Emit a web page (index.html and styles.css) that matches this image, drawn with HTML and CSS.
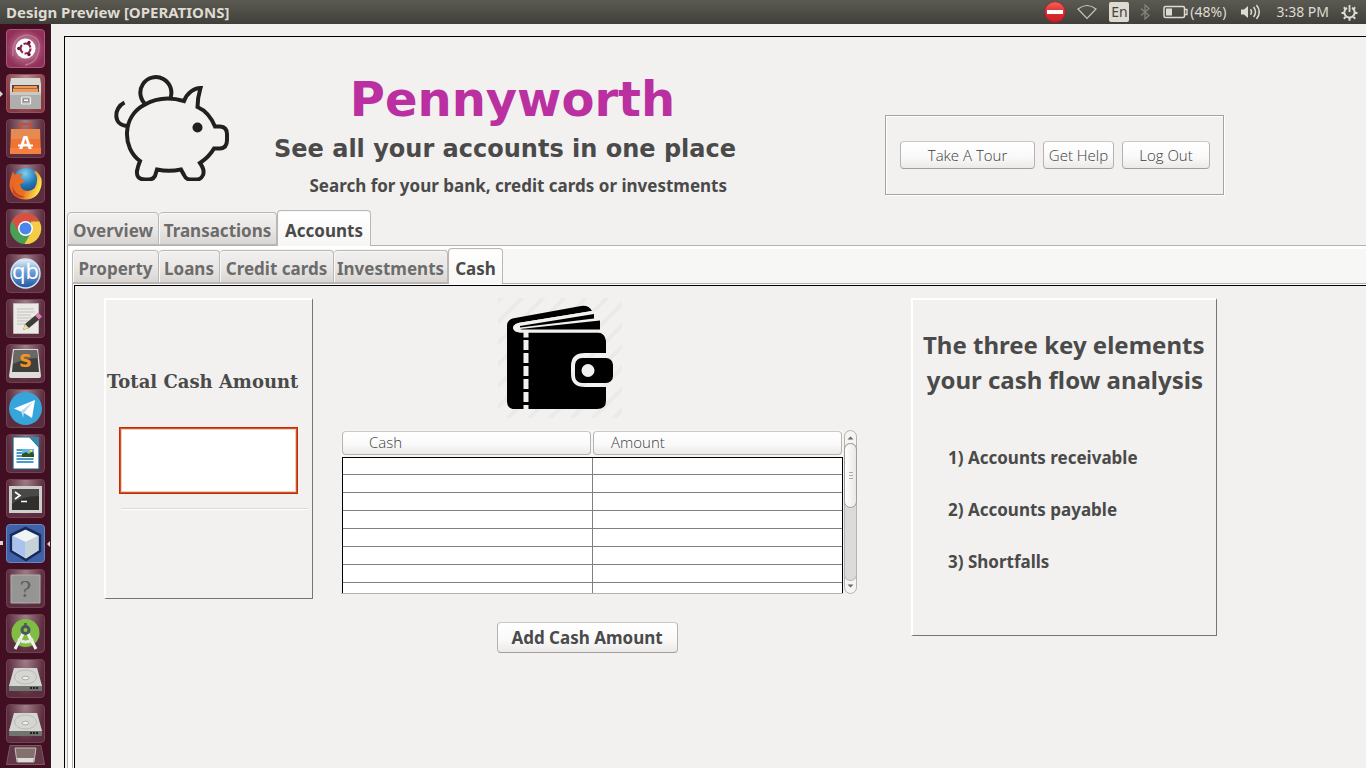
FILE: index.html
```html
<!DOCTYPE html>
<html lang="en">
<head>
<meta charset="utf-8">
<title>Design Preview [OPERATIONS]</title>
<link rel="stylesheet" href="styles.css">
</head>
<body>
<header class="topbar">
  <span class="topbar-title">Design Preview [OPERATIONS]</span>
  <div class="indicators">
    <svg class="ind-stop" width="22" height="22" viewBox="0 0 22 22"><defs><linearGradient id="stop" x1="0" y1="0" x2="0" y2="1"><stop offset="0" stop-color="#f2675c"/><stop offset=".5" stop-color="#dc2f2d"/><stop offset="1" stop-color="#c91e28"/></linearGradient></defs><circle cx="11" cy="11" r="10.3" fill="url(#stop)" stroke="#a3202a" stroke-width=".8"/><rect x="3" y="9" width="16" height="4" fill="#fff"/></svg>
    <svg class="ind-wifi" width="20" height="16" viewBox="0 0 20 16"><path d="M1 5 Q10-2 19 5 L10 14.500Z" fill="none" stroke="#c9c5bc" stroke-width="1.200"/></svg>
    <span class="ind-lang">En</span>
    <svg class="ind-bt" width="10" height="16" viewBox="0 0 10 16"><path d="M1 4.500 9 11.500 5 15V1L9 4.500 1 11.500" fill="none" stroke="#85837b" stroke-width="1.300"/></svg>
    <svg class="ind-bat" width="25" height="14" viewBox="0 0 25 14"><rect x="1" y="1.500" width="20.500" height="11" rx="1.500" fill="none" stroke="#dfdbd2" stroke-width="1.500"/><rect x="3" y="3.500" width="6" height="7" fill="#dfdbd2"/><path d="M22 4.500h2v5h-2" fill="none" stroke="#dfdbd2" stroke-width="1.300"/></svg>
    <span class="ind-pct">(48%)</span>
    <svg class="ind-vol" width="21" height="18" viewBox="0 0 21 18"><path d="M1 6.500h3L8 3v12l-4-3.500H1z" fill="#dfdbd2"/><path d="M10.500 6.200q2 2.800 0 5.600M13.500 4q4 5 0 10M16.500 2q5.500 7 0 14" fill="none" stroke="#dfdbd2" stroke-width="1.500"/></svg>
    <span class="ind-time">3:38 PM</span>
    <svg class="ind-gear" width="17" height="17" viewBox="0 0 17 17"><g fill="none" stroke="#dfdbd2"><path d="M6 3.800a5.200 5.200 0 1 0 5 0" stroke-width="2"/><path d="M8.500 1v7" stroke-width="1.800"/><path d="M.5 9h2.500M14 9h2.500M2.800 3.300l1.700 1.700M14.200 3.300l-1.700 1.700M2.800 14.700l1.800-1.800M14.200 14.700l-1.800-1.800M8.500 14v2.800" stroke-width="2"/></g></svg>
  </div>
</header>
<div class="desktop">
  <nav class="launcher" aria-label="Launcher">
    <a href="#" class="tile tile-dash" aria-label="Dash"><svg viewBox="0 0 39 39"><path d="M7 27Q5 9 20 6 35 7 33 21 31 34 19 36" fill="none" stroke="#c58aa2" stroke-width="1.500" opacity=".7"/><path d="M11 30Q3 20 12 11 22 3 30 12 36 25 26 30" fill="#c47794" opacity=".35"/><circle cx="19.500" cy="19.500" r="10" fill="#fff"/><circle cx="19.500" cy="19.500" r="5" fill="none" stroke="#8c2148" stroke-width="2.200" stroke-dasharray="8.600 1.870"/><g fill="#6b1235"><circle cx="12.800" cy="19.500" r="1.700"/><circle cx="23" cy="13.500" r="1.700"/><circle cx="23" cy="25.500" r="1.700"/></g></svg></a>
    <a href="#" class="tile tile-files" aria-label="Files"><svg viewBox="0 0 39 39"><path d="M5 4h29l1 6v25H4V10z" fill="#d8d8d5"/><path d="M6 11h27v7H6z" fill="#5d4337"/><path d="M8 12h23v2H8zM7 14.500h25v4H7z" fill="#ef9858"/><path d="M4 18h31v17H4z" fill="#aeaeac"/><path d="M4 18h31v3H4z" fill="#c9c9c6"/><rect x="15.500" y="23" width="9" height="7" rx="1" fill="none" stroke="#eee" stroke-width="1.200"/><rect x="17.500" y="25" width="5" height="2.500" fill="#fff" stroke="#777" stroke-width=".7"/></svg></a>
    <a href="#" class="tile" aria-label="Software"><svg viewBox="0 0 39 39"><path d="M14 13V8q0-3 3-3h5q3 0 3 3v5" fill="none" stroke="#c94f2c" stroke-width="2.200"/><path d="M5 10h29l1 25H4z" fill="#ef7434"/><path d="M5 10h29v10H5z" fill="#e58a50"/><path d="M4 29h31v6H4z" fill="#f4813f"/><text x="19.500" y="30" text-anchor="middle" class="glyph-a">A</text><path d="M12 26.500h15" stroke="#fff" stroke-width="2"/></svg></a>
    <a href="#" class="tile" aria-label="Firefox"><svg viewBox="0 0 39 39"><defs><radialGradient id="globe" cx=".45" cy=".2" r=".8"><stop offset="0" stop-color="#7fd0ef"/><stop offset=".5" stop-color="#2479bb"/><stop offset="1" stop-color="#143a70"/></radialGradient><linearGradient id="fox" x1="0" y1="0" x2="1" y2=".3"><stop offset="0" stop-color="#e8642c"/><stop offset=".6" stop-color="#e9701f"/><stop offset="1" stop-color="#fbe14a"/></linearGradient></defs><circle cx="20.500" cy="18" r="14" fill="url(#globe)"/><path d="M30 7Q37 13 35.500 21 33 35 19.500 35.500 6 35 3.500 22 3.500 15 7 7.500L9 11Q12 9.500 17 10L14 14Q17 15 19 17 16 20 14 20 15 27 22 27 31 26 31 16 31.500 11 28 8Z" fill="url(#fox)"/><path d="M6 20Q8 31 19 33 12 35 7 29Z" fill="#cf3f25"/></svg></a>
    <a href="#" class="tile" aria-label="Chrome"><svg viewBox="0 0 39 39"><circle cx="19.500" cy="19.500" r="15.500" fill="#4b9e55"/><path d="M6 12A15.500 15.500 0 0 1 33.500 12.500H19.500L13 23z" fill="#d95040"/><path d="M33.500 12.500A15.500 15.500 0 0 1 18.500 35L26 22l-1-9.500z" fill="#f6cb46"/><circle cx="19.500" cy="19.500" r="7.500" fill="#fff"/><circle cx="19.500" cy="19.500" r="6" fill="#4a86ea"/></svg></a>
    <a href="#" class="tile" aria-label="qBittorrent"><svg viewBox="0 0 39 39"><defs><linearGradient id="qb" x1="0" y1="0" x2="0" y2="1"><stop offset="0" stop-color="#e9f1fa"/><stop offset=".45" stop-color="#6c9ed6"/><stop offset="1" stop-color="#2255a4"/></linearGradient></defs><circle cx="19.500" cy="19.500" r="14.500" fill="url(#qb)" stroke="#d4e2f3" stroke-width="1.500"/><text x="19.500" y="25" text-anchor="middle" class="glyph-qb">qb</text></svg></a>
    <a href="#" class="tile" aria-label="Text editor"><svg viewBox="0 0 39 39"><path d="M7.500 4.500h25v30h-25z" fill="#eceae7" stroke="#bdb9b5"/><path d="M11 10h17M11 13h18M11 16h14M11 19h16M11 22h12M11 25h8" stroke="#c3c1be"/><path d="M17 31l2-6 12-10 4 4-12 10z" fill="#3c3c3a"/><path d="M17 31l2-6 4 4z" fill="#eadb9a"/><path d="M29 16.500l3-3 4 4-3 3z" fill="#d77fb3"/></svg></a>
    <a href="#" class="tile" aria-label="Sublime Text"><svg viewBox="0 0 39 39"><path d="M7 5h25l3 27q0 2-2 2H5q-2 0-2-2z" fill="#deddda"/><path d="M8 6h23l2 22H6z" fill="#3f3f3d"/><path d="M8 6h23l1 8Q18 14 7 20z" fill="#686865"/><text x="19.500" y="23" text-anchor="middle" class="glyph-s">S</text></svg></a>
    <a href="#" class="tile" aria-label="Telegram"><svg viewBox="0 0 39 39"><circle cx="19.500" cy="19.500" r="16.500" fill="#36a5dc"/><path d="M8 19.500 29 11 26 29l-8-5z" fill="#fff"/><path d="M15 22 27 13 18 24l-1 5z" fill="#bcd8ea"/></svg></a>
    <a href="#" class="tile" aria-label="Writer"><svg viewBox="0 0 39 39"><path d="M7 3h17l9 10v22H7z" fill="#fff" stroke="#1d5f85" stroke-width="1.200"/><path d="M23 3h10v10z" fill="#3388ad"/><path d="M10.500 16h8M10.500 19h8M10.500 22h8M10.500 25h17M10.500 28h17" stroke="#4e9ac4" stroke-width="2"/><path d="M16 15h12v8H16z" fill="#67b9e3"/><path d="M16 23v-3l4-2 3 2 3-3 2 3v3z" fill="#31521f"/><circle cx="25" cy="17" r="1.300" fill="#f4dc50"/></svg></a>
    <a href="#" class="tile" aria-label="Terminal"><svg viewBox="0 0 39 39"><path d="M4.500 8.500h30v24h-30z" fill="#2f2f2d" stroke="#cfceca" stroke-width="3"/><path d="M6 10h27v7Q15 17 6 25z" fill="#494947"/><path d="M9 13l5 3.500-5 3.500M15 22.500h6" fill="none" stroke="#fff" stroke-width="1.600"/></svg></a>
    <a href="#" class="tile tile-active" aria-label="NetBeans"><svg viewBox="0 0 39 39"><path d="M19.500 4 34 11v16L20 36 5 27V11z" fill="#d2deeb" stroke="#182a5a" stroke-width="2.500"/><path d="M19.500 6 32 12l-12.500 6L7 12z" fill="#eef5f4"/><path d="M7 12l12.500 6v16L7 26z" fill="#a9c3ee"/><path d="M19.500 18 32 12v14l-12.500 8z" fill="#c5d3d8"/></svg></a>
    <a href="#" class="tile" aria-label="Unknown application"><svg viewBox="0 0 39 39"><path d="M5 6h29v28H5z" fill="#959593" stroke="#b0afad"/><text x="19.500" y="28" text-anchor="middle" class="glyph-q">?</text></svg></a>
    <a href="#" class="tile" aria-label="Android Studio"><svg viewBox="0 0 39 39"><circle cx="19.500" cy="19" r="14" fill="#80bd43"/><path d="M18 18 9 35M21 18l9 17" stroke="#f2f2ef" stroke-width="3"/><path d="M12 25q8 6 15 0" fill="none" stroke="#e8e8e3" stroke-width="3"/><circle cx="19.500" cy="16" r="3.500" fill="#8bc34a" stroke="#4c565d" stroke-width="3"/><path d="M19.500 9v4" stroke="#4c565d" stroke-width="2.500"/></svg></a>
    <a href="#" class="tile" aria-label="Disk"><svg viewBox="0 0 39 39"><path d="M8 9h23l5 18v5H3v-5z" fill="#72726f"/><path d="M8 9h23l5 18H3z" fill="#d5d5d2"/><ellipse cx="19.500" cy="18" rx="11" ry="7" fill="none" stroke="#babab7"/><ellipse cx="19.500" cy="19" rx="3.500" ry="1.800" fill="#eee" stroke="#aaa"/><path d="M24 29h9" stroke="#222" stroke-width="2" stroke-dasharray="2 1"/></svg></a>
    <a href="#" class="tile tile-tail" aria-label="Disk"><svg viewBox="0 0 39 39"><path d="M8 9h23l5 18v5H3v-5z" fill="#72726f"/><path d="M8 9h23l5 18H3z" fill="#d5d5d2"/><ellipse cx="19.500" cy="18" rx="11" ry="7" fill="none" stroke="#babab7"/><ellipse cx="19.500" cy="19" rx="3.500" ry="1.800" fill="#eee" stroke="#aaa"/><path d="M24 29h9" stroke="#222" stroke-width="2" stroke-dasharray="2 1"/></svg></a>
    <a href="#" class="tile-folded" aria-label="Trash"><svg viewBox="0 0 39 21"><path d="M4 .5h31l3.500 19H.5z" fill="#623746" stroke="#7d5664"/><path d="M9 3h21l-2 14H11z" fill="#84716f" stroke="#c4bcb9"/><path d="M11 13h17l-1 4H12z" fill="#dedbd7"/></svg></a>
  </nav>
  <main class="window">
    <div class="frame">
      <div class="banner">
        <svg class="pig" width="118" height="107" viewBox="0 0 118 107"><g fill="none" stroke="#231f20" stroke-width="4"><path d="M33.500 31A15.500 15.500 0 1 1 57 25"/><path d="M11.500 28.500C0 34 0 52 15 52"/><path d="M27 87C9 74 9 43 31 31 43 24 57 23 71 27 74 19 81 14 87.500 14Q84.500 24 84.500 33 96 38 102 52.500H107Q114 53 114 60V66Q114 74 107 74.500H101Q96 83 87 89 92 96 90 101 88 105.500 84 105.500H77Q73 105.500 71 101L68 95.500Q56 98 44 95.500L42 102Q40 105.500 36 105.500H32Q23 105.500 24 97 25 92 27 87Z"/></g><circle cx="84.500" cy="53.500" r="5" fill="#231f20"/></svg>
        <div class="headings">
          <h1>Pennyworth</h1>
          <h2>See all your accounts in one place</h2>
          <p>Search for your bank, credit cards or investments</p>
        </div>
        <div class="actions">
          <button type="button" class="btn btn-tour">Take A Tour</button>
          <button type="button" class="btn btn-help">Get Help</button>
          <button type="button" class="btn btn-out">Log Out</button>
        </div>
      </div>
      <div class="tabs" role="tablist">
        <button type="button" role="tab" class="tab tab-overview">Overview</button>
        <button type="button" role="tab" class="tab tab-trans">Transactions</button>
        <button type="button" role="tab" class="tab tab-accounts tab-on" aria-selected="true">Accounts</button>
      </div>
      <div class="pane">
        <div class="tabs tabs-inner" role="tablist">
          <button type="button" role="tab" class="tab tab-property">Property</button>
          <button type="button" role="tab" class="tab tab-loans">Loans</button>
          <button type="button" role="tab" class="tab tab-cards">Credit cards</button>
          <button type="button" role="tab" class="tab tab-invest">Investments</button>
          <button type="button" role="tab" class="tab tab-cash tab-on" aria-selected="true">Cash</button>
        </div>
        <div class="pane-inner">
          <div class="content">
            <section class="panel total">
              <label for="total">Total Cash Amount</label>
              <input id="total" type="text">
              <hr>
            </section>
            <section class="center">
              <svg class="wallet" width="124" height="120" viewBox="0 0 124 120"><defs><pattern id="hatch" width="15" height="15" patternUnits="userSpaceOnUse" patternTransform="rotate(45)"><rect width="4" height="15" fill="#ebeae8"/></pattern></defs><rect width="124" height="120" fill="url(#hatch)"/><path d="M9 28Q9 21 17 20L83 8Q91 7 94 13L26 24Q15 25 15 30 16 34 22 34.500H100Q107 35 108 43V55H87Q73 55 73 68V76Q73 89 87 89H108V103Q108 111 99 111H17Q9 111 9 103Z"/><path d="M94 13 26 24Q15 25 15 30 16 34 22 34.500H102V14Z" fill="#f2f1ef"/><path d="M22 28 96 16V20.500L22 29.500ZM22 31 102 22.500V31.500H24Z"/><rect x="77" y="60" width="38" height="25" rx="7"/><circle cx="90" cy="72.500" r="6.500" fill="#f2f1ef"/><path d="M28 34v77" stroke="#f2f1ef" stroke-width="5" stroke-dasharray="5.500 2.500 10 3 10 3 10 3 10 3 10 3"/></svg>
              <div class="scroller">
                <table class="grid">
                  <thead><tr><th scope="col"><span class="head head-cash">Cash</span></th><th scope="col"><span class="head">Amount</span></th></tr></thead>
                  <tbody>
                    <tr><td></td><td></td></tr>
                    <tr><td></td><td></td></tr>
                    <tr><td></td><td></td></tr>
                    <tr><td></td><td></td></tr>
                    <tr><td></td><td></td></tr>
                    <tr><td></td><td></td></tr>
                    <tr><td></td><td></td></tr>
                    <tr><td></td><td></td></tr>
                  </tbody>
                </table>
                <div class="bar">
                  <svg class="arrow" width="7" height="4" viewBox="0 0 7 4"><path d="M.5 3.500 3.500.5l3 3z" fill="#666"/></svg>
                  <div class="track"><div class="thumb"><i></i><i></i><i></i></div></div>
                  <svg class="arrow" width="7" height="4" viewBox="0 0 7 4"><path d="M.5.5 3.500 3.500l3-3z" fill="#666"/></svg>
                </div>
              </div>
              <button type="button" class="btn btn-add">Add Cash Amount</button>
            </section>
            <section class="panel info">
              <h3>The three key elements<br>your cash flow analysis</h3>
              <ul>
                <li>1) Accounts receivable</li>
                <li>2) Accounts payable</li>
                <li>3) Shortfalls</li>
              </ul>
            </section>
          </div>
        </div>
      </div>
    </div>
  </main>
</div>
</body>
</html>
```
FILE: styles.css
```css
* { box-sizing: border-box; }
body {
  margin: 0;
  height: 100vh;
  overflow: hidden;
  display: flex;
  flex-direction: column;
  background: #f2f1ef;
  color: #4a4a4a;
  font-family: "Noto Sans", sans-serif;
}
h1, h2, h3, p, ul { margin: 0; padding: 0; }
svg { display: block; flex: none; }

.topbar {
  flex: none;
  height: 24px;
  padding: 0 8px 0 6px;
  display: flex;
  align-items: center;
  justify-content: space-between;
  background: linear-gradient(#5b5a52, #403f3a);
  color: #dfdbd2;
  font-size: 14px;
  line-height: 24px;
}
.topbar-title { font-weight: 700; font-size: 15px; }
.indicators { display: flex; align-items: center; }
.ind-wifi { margin-left: 11px; }
.ind-lang {
  margin-left: 12px;
  width: 20px;
  height: 20px;
  border-radius: 2px;
  background: #dfdbd2;
  color: #45443f;
  line-height: 20px;
  text-align: center;
}
.ind-bt { margin-left: 11px; }
.ind-bat { margin-left: 13px; }
.ind-pct { margin-left: 2px; }
.ind-vol { margin-left: 14px; }
.ind-time { margin-left: 15px; }
.ind-gear { margin-left: 12px; }

.desktop { flex: 1; min-height: 0; display: flex; }
.launcher {
  flex: none;
  width: 51px;
  padding: 5px 6px 0;
  overflow: hidden;
  background: #420f22;
  border-right: 1px solid #292026;
}
.tile {
  display: block;
  width: 39px;
  height: 39px;
  margin-bottom: 6px;
  border: 1px solid #6d4452;
  border-radius: 4px;
  background: radial-gradient(ellipse at 50% 0, #a07d89, #5c2d3e 70%);
}
.tile svg { width: 39px; height: 39px; margin: -1px; }
.tile-dash { background: radial-gradient(#c593a9, #93305a 75%); border-color: #a65b79; }
.tile-files { background: radial-gradient(ellipse at 50% 0, #b98b8b, #873a43 80%); border-color: #96535b; }
.tile-active { background: #3f61a8; border-color: #6c86bd; position: relative; }
.tile-files { position: relative; }
.tile-files::before, .tile-active::before, .tile-active::after {
  content: "";
  position: absolute;
  top: 16px;
  left: -7px;
  border: 3px solid transparent;
  border-left-color: #d9d3d5;
}
.tile-active::before { border: 0; width: 3px; height: 4px; background: #d9d3d5; }
.tile-active::after { left: 37px; border-left-color: transparent; border-right-color: #d9d3d5; }
.tile-tail { margin-bottom: 2px; }
.tile-folded { display: block; width: 39px; height: 21px; }
.glyph-a { font: 700 18px "Noto Sans", sans-serif; fill: #fff; }
.glyph-qb { font: 400 22px "Noto Sans", sans-serif; fill: #fff; }
.glyph-s { font: 700 18px "DejaVu Sans", sans-serif; fill: #f7931e; }
.glyph-q { font: 400 22px "DejaVu Serif", serif; fill: #606060; }

.window { flex: 1; min-width: 0; display: flex; padding: 12px 0 0 13px; }
.frame {
  flex: 1;
  min-width: 0;
  display: flex;
  flex-direction: column;
  border: solid #000;
  border-width: 1px 0 0 1px;
}
.banner { display: flex; align-items: flex-start; padding: 37px 142px 0 48px; height: 173px; }
.headings { margin-left: 43px; width: 453px; }
h1 {
  padding-left: 24px;
  color: #bb30a0;
  font: 700 48px/50px "DejaVu Sans", sans-serif;
  text-align: center;
}
h2 { font: 700 24px/50px "DejaVu Sans", sans-serif; white-space: nowrap; }
.headings p { font-weight: 700; font-size: 17px; line-height: 24px; text-align: right; white-space: nowrap; }
.actions {
  margin-top: 41px;
  margin-left: auto;
  display: flex;
  gap: 8px;
  padding: 25px 13px 25px 14px;
  border: 1px solid #a5a4a2;
  box-shadow: 1px 1px #fff, inset 1px 1px #fff;
}
.btn {
  height: 28px;
  padding: 0 0 1px;
  border: 1px solid #b5b2af;
  border-top-color: #cbc9c6;
  border-bottom-color: #a19e9b;
  border-radius: 4px;
  background: linear-gradient(#fff, #fafafa 55%, #eceae8);
  color: #3c3c3c;
  font: 300 15px "Open Sans", sans-serif;
  white-space: nowrap;
}
.btn-tour { width: 135px; }
.btn-help { width: 71px; }
.btn-out { width: 88px; }

.tabs { display: flex; align-items: flex-end; padding-left: 2px; height: 35px; flex: none; }
.tab {
  height: 33px;
  padding: 4px 0 0;
  border: 1px solid #bab7b4;
  border-left-width: 0;
  border-radius: 4px 4px 0 0;
  background: linear-gradient(#f1f0ee, #eae8e6 50%, #d8d5d2);
  box-shadow: inset 1px 1px #f8f8f7;
  color: #6c6c6c;
  font: 700 17px "Noto Sans", sans-serif;
  white-space: nowrap;
}
.tab:first-child { border-left-width: 1px; }
.tab-on {
  position: relative;
  height: 36px;
  margin-bottom: -1px;
  padding-top: 4px;
  border-left-width: 1px;
  border-bottom: 0;
  background: linear-gradient(#fff, #f6f6f5);
  color: #4a4a4a;
}
.tab-overview { width: 92px; }
.tab-trans { width: 118px; }
.tab-accounts { width: 94px; }
.tab-property { width: 87px; }
.tab-loans { width: 61px; }
.tab-cards { width: 114px; }
.tab-invest { width: 114px; }
.tab-cash { width: 55px; }
.pane {
  flex: 1;
  display: flex;
  flex-direction: column;
  margin-left: 2px;
  padding: 3px 0 0 4px;
  border: solid #b5b2af;
  border-width: 1px 0 0 1px;
  background: #fff;
}
.tabs-inner { padding-left: 0; height: 34px; background: #f7f7f6; }
.pane-inner { flex: 1; display: flex; padding: 1px 0 0 1px; border: solid #b5b2af; border-width: 1px 0 0 1px; }
.content {
  flex: 1;
  min-width: 0;
  padding: 12px 0 0 29px;
  border: solid #000;
  border-width: 1px 0 0 1px;
  background: #f2f1ef;
  display: grid;
  grid-template-columns: minmax(0, 209fr) 28fr minmax(0, 516fr) 54fr minmax(0, 306fr) 149fr;
  align-items: start;
}
.panel { border: solid #777472; border-width: 2px 1px 1px 2px; border-top-color: #fff; border-left-color: #fff; }
.total { grid-column: 1; display: flex; flex-direction: column; padding: 70px 4px 88px 1px; }
.total label { font: 700 18px/24px "DejaVu Serif", serif; white-space: nowrap; }
.total input {
  height: 67px;
  margin: 33px 10px 0 12px;
  padding: 8px;
  border: 1px solid #d9200c;
  border-radius: 0;
  outline: 0;
  background: #fff;
  box-shadow: inset 0 0 0 1px #b5622f, inset 0 0 0 2px #f2cfae;
  font-size: 16px;
}
.total hr { width: auto; height: 2px; margin: 14px 0 0 14px; border: solid #dcdad8; border-width: 1px 0 0; background: #fff; }
.center { grid-column: 3; display: flex; flex-direction: column; align-items: center; }
.wallet { margin-right: 78px; }
.scroller { display: flex; gap: 1px; align-self: stretch; height: 164px; margin-top: 12px; }
.grid {
  flex: 1;
  display: block;
  overflow: hidden;
  border-bottom: 1px solid #b5b2af;
  border-spacing: 0;
  table-layout: fixed;
}
.grid thead, .grid tbody { display: block; }
.grid tr { display: flex; }
.grid th, .grid td { flex: 1; display: block; padding: 0; }
.grid thead { height: 27px; padding: 1px 1px 0; background: #f7f6f5; }
.grid thead tr { gap: 2px; }
.head {
  display: block;
  height: 24px;
  padding-left: 17px;
  border: 1px solid #b5b2af;
  border-top-color: #cbc9c6;
  border-radius: 4px;
  background: linear-gradient(#fff, #fafafa 55%, #eceae8);
  color: #3c3c3c;
  font: 300 15px/20px "Open Sans", sans-serif;
  text-align: left;
}
.head-cash { padding-left: 26px; }
.grid tbody { margin-left: 1px; border: solid #000; border-width: 1px 1px 0; background: #fff; }
.grid td { height: 18px; border-bottom: 1px solid #808080; }
.grid tbody tr:first-child td { height: 17px; }
.grid td:first-child { border-right: 1px solid #808080; }
.bar {
  flex: none;
  width: 13px;
  display: flex;
  flex-direction: column;
  align-items: center;
  padding: 5px 0;
  border: 1px solid #b5b2af;
  border-radius: 7px;
  background: #f5f4f3;
}
.track { flex: 1; width: 13px; margin: 3px 0; border: solid #b5b2af; border-width: 0 1px 1px; border-radius: 7px; background: #dcdbd9; }
.thumb {
  width: 13px;
  height: 65px;
  margin-left: -1px;
  display: flex;
  flex-direction: column;
  justify-content: center;
  align-items: center;
  gap: 2px;
  border: 1px solid #a09d9a;
  border-radius: 7px;
  background: linear-gradient(90deg, #fff, #e9e8e6);
}
.thumb i { width: 4px; height: 1px; background: #aaa; }
.btn-add { width: 181px; height: 31px; margin: 28px 24px 0 0; color: #4a4a4a; font: 700 17px "Noto Sans", sans-serif; }
.info { grid-column: 5; padding: 27px 13px 47px 35px; }
.info h3 { margin-left: -25px; font-size: 24px; line-height: 35px; text-align: right; white-space: nowrap; }
.info ul { margin-top: 35px; list-style: none; font-weight: 700; font-size: 17px; line-height: 52px; }
```
